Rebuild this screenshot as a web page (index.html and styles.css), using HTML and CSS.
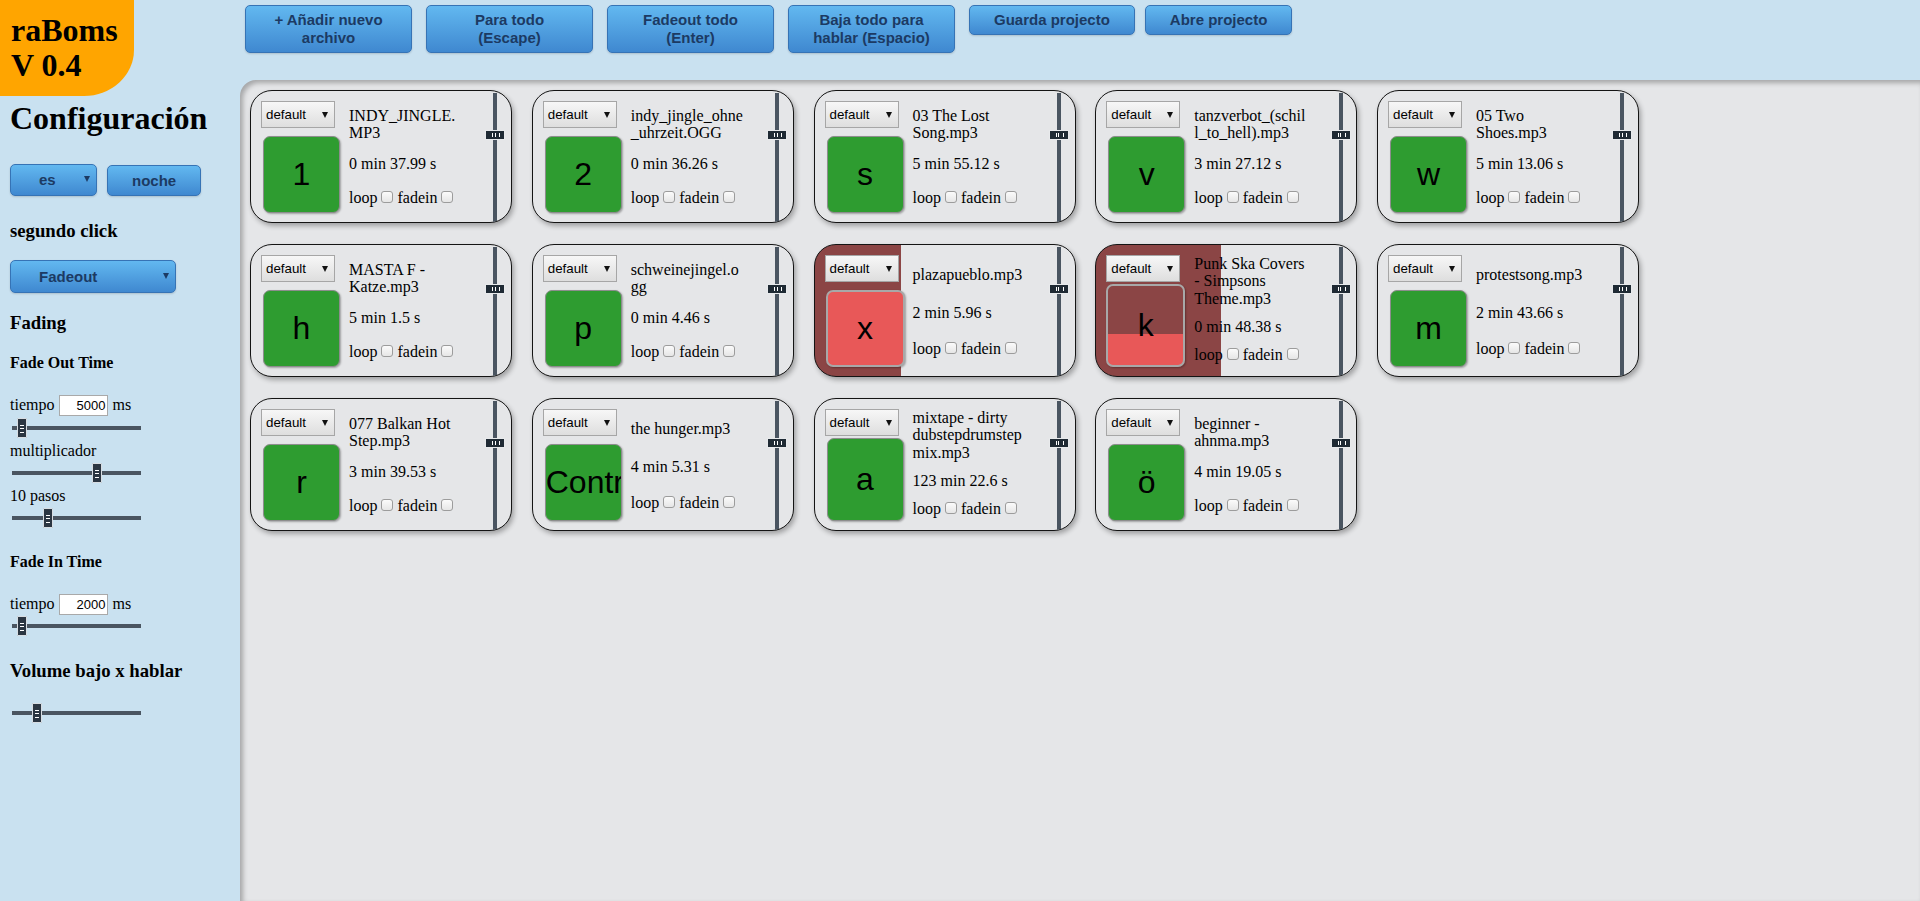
FILE: index.html
```html
<!DOCTYPE html>
<html lang="es">
<head>
<meta charset="utf-8">
<title>raBoms V 0.4</title>
<link rel="stylesheet" href="styles.css">
</head>
<body>
<div class="app">
  <aside class="sidebar">
    <div class="logo">raBoms<br>V 0.4</div>
    <div class="side-content">
      <h1 class="cfg-title">Configuración</h1>
      <div class="lang-row">
        <div class="bbtn bselect lang">es<span class="arrow"></span></div>
        <div class="bbtn">noche</div>
      </div>
      <h3 class="sh3 s-seg">segundo click</h3>
      <div class="bbtn bselect second">Fadeout<span class="arrow"></span></div>
      <h3 class="sh3 s-fading">Fading</h3>
      <h4 class="sh4 s-fot">Fade Out Time</h4>
      <div class="trow t-out"><span>tiempo</span><span class="num">5000</span><span>ms</span></div>
      <div class="hslider s1"><span class="knob" style="left:5px"></span></div>
      <div class="slabel">multiplicador</div>
      <div class="hslider s2"><span class="knob" style="left:80px"></span></div>
      <div class="slabel">10 pasos</div>
      <div class="hslider s2"><span class="knob" style="left:31px"></span></div>
      <h4 class="sh4 s-fit">Fade In Time</h4>
      <div class="trow t-in"><span>tiempo</span><span class="num">2000</span><span>ms</span></div>
      <div class="hslider s4"><span class="knob" style="left:5px"></span></div>
      <h3 class="sh3 s-vol">Volume bajo x hablar</h3>
      <div class="hslider s5"><span class="knob" style="left:20px"></span></div>
    </div>
  </aside>

  <div class="right">
    <nav class="toolbar">
      <div class="bbtn tbtn">+ Añadir nuevo archivo</div>
      <div class="bbtn tbtn">Para todo (Escape)</div>
      <div class="bbtn tbtn">Fadeout todo (Enter)</div>
      <div class="bbtn tbtn">Baja todo para hablar (Espacio)</div>
      <div class="bbtn tbtn">Guarda projecto</div>
      <div class="bbtn tbtn open">Abre projecto</div>
    </nav>

    <main class="board">
      <div class="card t2">
        <div class="cleft"><div class="csel">default<span class="carrow"></span></div><div class="key">1</div></div>
        <div class="ctext"><div class="ctitle">INDY_JINGLE.MP3</div><div class="cdur">0 min 37.99 s</div><div class="cloop">loop<span class="cb"></span>fadein<span class="cb"></span></div></div>
        <div class="vslider"><span class="vknob"></span></div>
      </div>
      <div class="card t2">
        <div class="cleft"><div class="csel">default<span class="carrow"></span></div><div class="key">2</div></div>
        <div class="ctext"><div class="ctitle">indy_jingle_ohne_uhrzeit.OGG</div><div class="cdur">0 min 36.26 s</div><div class="cloop">loop<span class="cb"></span>fadein<span class="cb"></span></div></div>
        <div class="vslider"><span class="vknob"></span></div>
      </div>
      <div class="card t2">
        <div class="cleft"><div class="csel">default<span class="carrow"></span></div><div class="key">s</div></div>
        <div class="ctext"><div class="ctitle">03 The Lost Song.mp3</div><div class="cdur">5 min 55.12 s</div><div class="cloop">loop<span class="cb"></span>fadein<span class="cb"></span></div></div>
        <div class="vslider"><span class="vknob"></span></div>
      </div>
      <div class="card t2">
        <div class="cleft"><div class="csel">default<span class="carrow"></span></div><div class="key">v</div></div>
        <div class="ctext"><div class="ctitle">tanzverbot_(schill_to_hell).mp3</div><div class="cdur">3 min 27.12 s</div><div class="cloop">loop<span class="cb"></span>fadein<span class="cb"></span></div></div>
        <div class="vslider"><span class="vknob"></span></div>
      </div>
      <div class="card t2">
        <div class="cleft"><div class="csel">default<span class="carrow"></span></div><div class="key">w</div></div>
        <div class="ctext"><div class="ctitle">05 Two Shoes.mp3</div><div class="cdur">5 min 13.06 s</div><div class="cloop">loop<span class="cb"></span>fadein<span class="cb"></span></div></div>
        <div class="vslider"><span class="vknob"></span></div>
      </div>

      <div class="card t2">
        <div class="cleft"><div class="csel">default<span class="carrow"></span></div><div class="key">h</div></div>
        <div class="ctext"><div class="ctitle">MASTA F - Katze.mp3</div><div class="cdur">5 min 1.5 s</div><div class="cloop">loop<span class="cb"></span>fadein<span class="cb"></span></div></div>
        <div class="vslider"><span class="vknob"></span></div>
      </div>
      <div class="card t2">
        <div class="cleft"><div class="csel">default<span class="carrow"></span></div><div class="key">p</div></div>
        <div class="ctext"><div class="ctitle">schweinejingel.ogg</div><div class="cdur">0 min 4.46 s</div><div class="cloop">loop<span class="cb"></span>fadein<span class="cb"></span></div></div>
        <div class="vslider"><span class="vknob"></span></div>
      </div>
      <div class="card t1 playing" style="--progress:86px">
        <div class="cleft"><div class="csel">default<span class="carrow"></span></div><div class="key">x</div></div>
        <div class="ctext"><div class="ctitle">plazapueblo.mp3</div><div class="cdur">2 min 5.96 s</div><div class="cloop">loop<span class="cb"></span>fadein<span class="cb"></span></div></div>
        <div class="vslider"><span class="vknob"></span></div>
      </div>
      <div class="card t3 playing fading" style="--progress:125px">
        <div class="cleft"><div class="csel">default<span class="carrow"></span></div><div class="key" style="--level:31px">k</div></div>
        <div class="ctext"><div class="ctitle">Punk Ska Covers - Simpsons Theme.mp3</div><div class="cdur">0 min 48.38 s</div><div class="cloop">loop<span class="cb"></span>fadein<span class="cb"></span></div></div>
        <div class="vslider"><span class="vknob"></span></div>
      </div>
      <div class="card t1">
        <div class="cleft"><div class="csel">default<span class="carrow"></span></div><div class="key">m</div></div>
        <div class="ctext"><div class="ctitle">protestsong.mp3</div><div class="cdur">2 min 43.66 s</div><div class="cloop">loop<span class="cb"></span>fadein<span class="cb"></span></div></div>
        <div class="vslider"><span class="vknob"></span></div>
      </div>

      <div class="card t2">
        <div class="cleft"><div class="csel">default<span class="carrow"></span></div><div class="key">r</div></div>
        <div class="ctext"><div class="ctitle">077 Balkan Hot Step.mp3</div><div class="cdur">3 min 39.53 s</div><div class="cloop">loop<span class="cb"></span>fadein<span class="cb"></span></div></div>
        <div class="vslider"><span class="vknob"></span></div>
      </div>
      <div class="card t1">
        <div class="cleft"><div class="csel">default<span class="carrow"></span></div><div class="key">Control</div></div>
        <div class="ctext"><div class="ctitle">the hunger.mp3</div><div class="cdur">4 min 5.31 s</div><div class="cloop">loop<span class="cb"></span>fadein<span class="cb"></span></div></div>
        <div class="vslider"><span class="vknob"></span></div>
      </div>
      <div class="card t3">
        <div class="cleft"><div class="csel">default<span class="carrow"></span></div><div class="key">a</div></div>
        <div class="ctext"><div class="ctitle">mixtape - dirty dubstepdrumstep mix.mp3</div><div class="cdur">123 min 22.6 s</div><div class="cloop">loop<span class="cb"></span>fadein<span class="cb"></span></div></div>
        <div class="vslider"><span class="vknob"></span></div>
      </div>
      <div class="card t2">
        <div class="cleft"><div class="csel">default<span class="carrow"></span></div><div class="key">ö</div></div>
        <div class="ctext"><div class="ctitle">beginner - ahnma.mp3</div><div class="cdur">4 min 19.05 s</div><div class="cloop">loop<span class="cb"></span>fadein<span class="cb"></span></div></div>
        <div class="vslider"><span class="vknob"></span></div>
      </div>
    </main>
  </div>
</div>
</body>
</html>
```

FILE: styles.css
```css
* { box-sizing: border-box; }
html, body { margin: 0; padding: 0; }
body {
  width: 1920px;
  height: 901px;
  overflow: hidden;
  background: #c9e1f0;
  font-family: "Liberation Serif", "Times New Roman", serif;
  color: #000;
}
.app { display: flex; height: 901px; }

/* ---------- sidebar ---------- */
.sidebar {
  width: 240px;
  flex: none;
  display: flex;
  flex-direction: column;
  align-items: flex-start;
}
.logo {
  width: 134px;
  height: 96px;
  background: #ffa500;
  border-bottom-right-radius: 50px 46px;
  padding: 13px 0 0 11px;
  font-weight: bold;
  font-size: 32px;
  line-height: 35px;
}
.side-content {
  display: flex;
  flex-direction: column;
  align-items: flex-start;
  padding-left: 10px;
}
.cfg-title {
  margin: 4px 0 0;
  font-size: 32px;
  line-height: 37px;
  font-weight: bold;
}
.lang-row { display: flex; gap: 10px; margin-top: 27px; }
.sh3 { margin: 0; font-size: 18.72px; line-height: 21px; font-weight: bold; }
.sh4 { margin: 0; font-size: 16px; line-height: 18px; font-weight: bold; }
.s-seg { margin-top: 24px; }
.second { margin-top: 19px; width: 166px; height: 33px; }
.s-fading { margin-top: 19px; }
.s-fot { margin-top: 21px; }
.s-fit { margin-top: 25px; }
.s-vol { margin-top: 24px; }

.trow {
  display: flex;
  align-items: center;
  height: 22px;
  margin-top: 22px;
  font-size: 16px;
  line-height: 18px;
}
.num {
  width: 49px;
  height: 21px;
  margin: 0 4px 0 5px;
  background: #fff;
  border: 1px solid #a9a9a9;
  font-family: "Liberation Sans", Arial, sans-serif;
  font-size: 13px;
  line-height: 19px;
  text-align: right;
  padding-right: 2px;
}
.slabel { margin-top: 4px; font-size: 16px; line-height: 18px; }

.hslider {
  position: relative;
  width: 129px;
  height: 20px;
  margin-top: 3px;
  margin-left: 2px;
}
.hslider::before {
  content: "";
  position: absolute;
  left: 0; right: 0; top: 8px;
  height: 4px;
  background: #4a5561;
}
.hslider.s1 { margin-top: 2px; }
.hslider.s4 { margin-top: 1px; }
.hslider.s5 { margin-top: 22px; }
.knob {
  position: absolute;
  top: 0;
  width: 10px;
  height: 20px;
  background: #2b3642;
  border: 1px solid #d8dde2;
  border-radius: 1px;
}
.knob::before {
  content: "";
  position: absolute;
  left: 2px; width: 4px; top: 6px; height: 6px;
  border-top: 1px solid #fff;
  border-bottom: 1px solid #fff;
}
.knob::after {
  content: "";
  position: absolute;
  left: 2px; width: 4px; top: 8.5px; height: 1px;
  background: #fff;
}

/* ---------- blue buttons ---------- */
.bbtn {
  display: block;
  border: 1px solid #3673b5;
  border-radius: 5px;
  background: linear-gradient(#62b8f0, #3f88d0);
  color: #1c3a63;
  font-family: "Liberation Sans", Arial, sans-serif;
  font-weight: bold;
  font-size: 15px;
  line-height: 18px;
  text-align: center;
  padding: 6px 24px;
  box-shadow: 0 1px 2px rgba(0,0,0,.15);
}
.bselect {
  position: relative;
  text-align: left;
  padding-left: 28px;
}
.lang { width: 87px; height: 32px; }
.lang-row .bbtn:not(.lang) { height: 31px; margin-top: 1px; }
.bselect .arrow {
  position: absolute;
  right: 6px;
  top: 11px;
  width: 0; height: 0;
  border-left: 3.5px solid transparent;
  border-right: 3.5px solid transparent;
  border-top: 6px solid #1c3a63;
}
.second { padding-top: 7px; }
.second .arrow { top: 12px; }

/* ---------- right side ---------- */
.right { flex: 1; display: flex; flex-direction: column; min-width: 0; }
.toolbar {
  height: 80px;
  flex: none;
  display: flex;
  align-items: flex-start;
  gap: 14px;
  padding: 5px 0 0 5px;
}
.tbtn {
  max-width: 167px;
  padding: 5px 24px;
}
.tbtn.open { margin-left: -4px; }
.board {
  flex: 1;
  background: #e5e6e8;
  border-top-left-radius: 16px;
  box-shadow: inset 3px 3px 5px rgba(0,0,0,.28);
  padding: 10px;
  display: flex;
  flex-wrap: wrap;
  align-content: flex-start;
  gap: 21px 19.75px;
}

/* ---------- cards ---------- */
.card {
  width: 262px;
  height: 133px;
  border: 1px solid #141414;
  border-radius: 22px;
  background: #e5e6e8;
  box-shadow: 2px 3px 5px rgba(0,0,0,.3);
  display: flex;
  overflow: hidden;
}
.card.playing {
  background: linear-gradient(to right, #8b4545 var(--progress), #e5e6e8 var(--progress));
}
.cleft {
  width: 98px;
  flex: none;
  display: flex;
  flex-direction: column;
  align-items: flex-start;
  padding: 10px 0 9.5px 10px;
}
.csel {
  position: relative;
  width: 74px;
  height: 27px;
  border: 1px solid #a6a6a6;
  background: linear-gradient(#f7f7f7, #dedede);
  font-family: "Liberation Sans", Arial, sans-serif;
  font-size: 13.33px;
  line-height: 25px;
  padding-left: 4px;
}
.carrow {
  position: absolute;
  right: 6px;
  top: 10px;
  border-left: 3.5px solid transparent;
  border-right: 3.5px solid transparent;
  border-top: 6px solid #111;
}
.key {
  margin-top: auto;
  margin-left: 2px;
  width: 77px;
  height: 77px;
  background: #2e9c30;
  border: 1px solid #8d8d8d;
  border-radius: 7px;
  box-shadow: 1px 1px 2px rgba(0,0,0,.3);
  font-family: "Liberation Sans", Arial, sans-serif;
  font-size: 32px;
  line-height: 75px;
  color: #000;
  text-align: center;
  overflow: hidden;
  white-space: nowrap;
}
.t3 .key { height: 83px; line-height: 81px; }
.playing .key {
  width: 79px;
  margin-left: 1px;
  background: #e85858;
  border: 2px solid #a8a8a8;
  line-height: 73px;
}
.t3.playing .key { width: 79px; margin-left: 0; line-height: 79px; }
.fading .key {
  background: linear-gradient(to top, #e85858 var(--level), #8b4545 var(--level));
}
.ctext {
  width: 113px;
  flex: none;
  display: flex;
  flex-direction: column;
  font-size: 16px;
  line-height: 18px;
}
.ctitle { line-height: 17.8px; overflow-wrap: anywhere; }
.cloop { display: flex; align-items: flex-end; }
.cb {
  display: block;
  width: 12px;
  height: 12px;
  margin: 0 4px 4px 4px;
  border: 1px solid #9c9c9c;
  border-radius: 3px;
  background: linear-gradient(#fbfbfb, #e6e6e6);
}
.t1 .ctext { padding-top: 21px; }
.t1 .cdur { margin-top: 20.5px; }
.t1 .cloop { margin-top: 17.3px; }
.t2 .ctext { padding-top: 15.7px; }
.t2 .cdur { margin-top: 12.6px; }
.t2 .cloop { margin-top: 16px; }
.t3 .ctext { padding-top: 9.7px; }
.t3 .cdur { margin-top: 9.9px; }
.t3 .cloop { margin-top: 10px; }

.vslider {
  position: relative;
  width: 20px;
  margin: 1.5px 0 0 23.3px;
  flex: none;
}
.vslider::before {
  content: "";
  position: absolute;
  left: 8px;
  top: 0; bottom: -2px;
  width: 4px;
  background: #4a5561;
}
.vknob {
  position: absolute;
  left: 0;
  top: 37.5px;
  width: 20px;
  height: 9.5px;
  background: #1f2a34;
  border: 1px solid #e8eaec;
}
.vknob::before {
  content: "";
  position: absolute;
  left: 6px; top: 2px;
  width: 6px; height: 4px;
  border-left: 1px solid #fff;
  border-right: 1px solid #fff;
}
.vknob::after {
  content: "";
  position: absolute;
  left: 8.5px; top: 2px;
  width: 1px; height: 4px;
  background: #fff;
}
```
